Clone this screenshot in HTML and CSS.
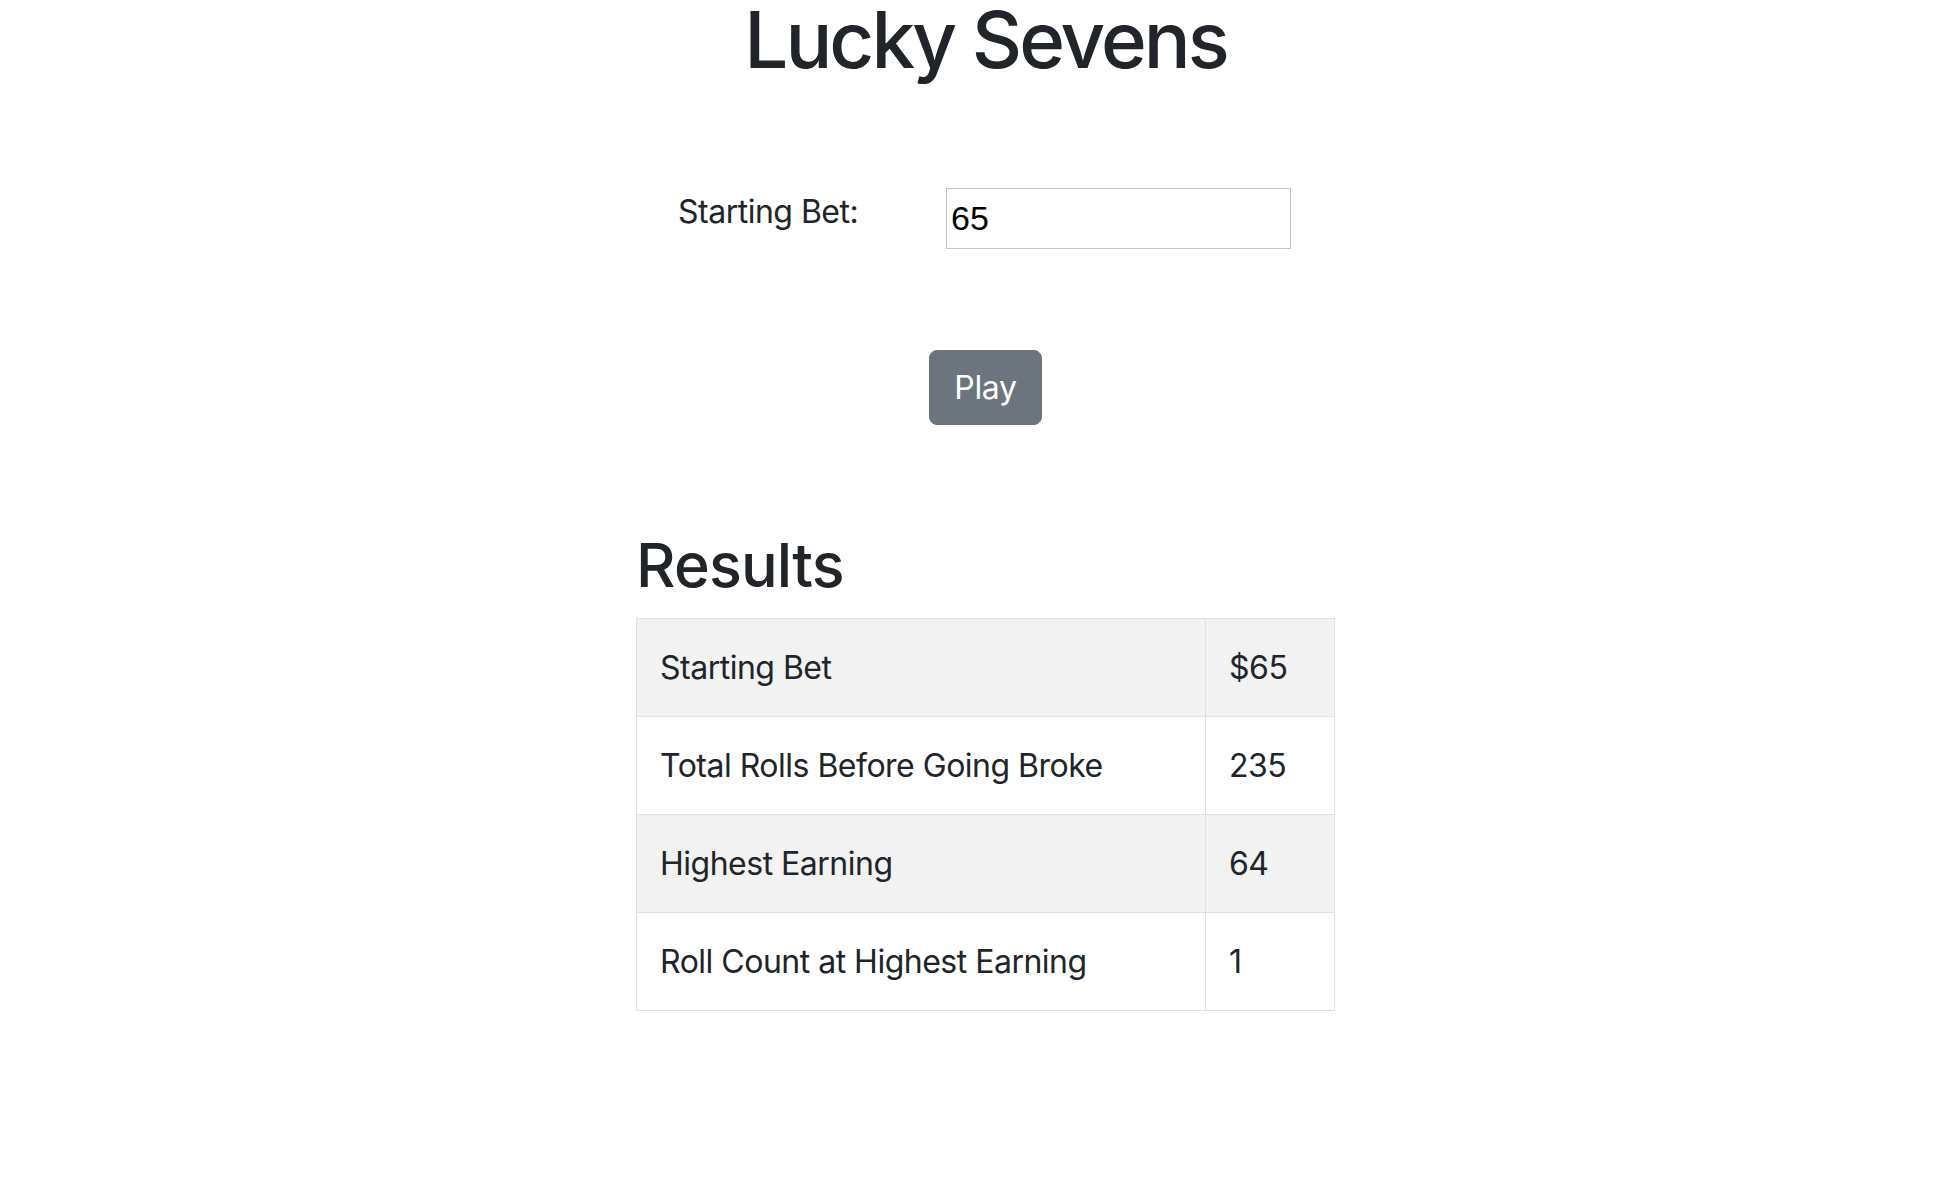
FILE: index.html
```html
<!DOCTYPE html>
<html lang="en">
<head>
<meta charset="utf-8">
<title>Lucky Sevens</title>
<link rel="stylesheet" href="styles.css">
</head>
<body>
<main class="page">
  <h1 class="title">Lucky Sevens</h1>
  <form class="bet-form">
    <div class="form-row">
      <label class="form-label" for="bet">Starting Bet:</label>
      <input class="form-input" id="bet" type="text" value="65">
    </div>
    <div class="form-actions">
      <button class="btn" type="button">Play</button>
    </div>
  </form>
  <section class="results">
    <h2 class="results-title">Results</h2>
    <table class="results-table">
      <tbody>
        <tr><td>Starting Bet</td><td>$65</td></tr>
        <tr><td>Total Rolls Before Going Broke</td><td>235</td></tr>
        <tr><td>Highest Earning</td><td>64</td></tr>
        <tr><td>Roll Count at Highest Earning</td><td>1</td></tr>
      </tbody>
    </table>
  </section>
</main>
</body>
</html>
```

FILE: styles.css
```css
html, body {
  margin: 0;
  background: #fff;
}
body {
  padding-left: 27px;
  font-family: Inter, "Noto Sans", sans-serif;
  font-size: 32px;
  line-height: 1.5;
  letter-spacing: -0.5px;
  color: #212529;
  overflow: hidden;
}
.page {
  width: 699px;
  margin: 0 auto;
}
.title {
  margin: 0;
  font-size: 78px;
  font-weight: 500;
  line-height: 79px;
  letter-spacing: -3px;
  text-align: center;
  white-space: nowrap;
}
.bet-form {
  margin-top: 109px;
}
.form-row {
  display: flex;
  align-items: flex-start;
  padding: 0 44px 0 42px;
}
.form-label {
  flex: 1;
  line-height: 48px;
}
.form-input {
  box-sizing: border-box;
  width: 345px;
  height: 61px;
  margin: 0;
  padding: 0 4px;
  border: 1px solid #c4c4c4;
  font-family: "Liberation Sans", Arial, sans-serif;
  font-size: 34px;
  letter-spacing: 0;
  color: #000;
  background: #fff;
}
.form-actions {
  display: flex;
  justify-content: center;
  margin-top: 101px;
}
.btn {
  box-sizing: border-box;
  height: 75px;
  padding: 0 24px;
  border: 1px solid #6c757d;
  border-radius: 8px;
  background: #6c757d;
  color: #fff;
  font-family: inherit;
  font-size: 32px;
  letter-spacing: -0.3px;
  line-height: 48px;
}
.results {
  margin-top: 101px;
}
.results-title {
  margin: 0 0 14px;
  font-size: 61px;
  font-weight: 500;
  line-height: 78px;
  letter-spacing: -0.8px;
}
.results-table {
  width: 699px;
  border-collapse: collapse;
}
.results-table td {
  padding: 24.5px 23px;
  border: 1px solid #dee2e6;
  line-height: 48px;
  vertical-align: top;
}
.results-table td:last-child {
  width: 82px;
}
.results-table tr:nth-child(odd) td {
  background: #f2f2f2;
}
```
